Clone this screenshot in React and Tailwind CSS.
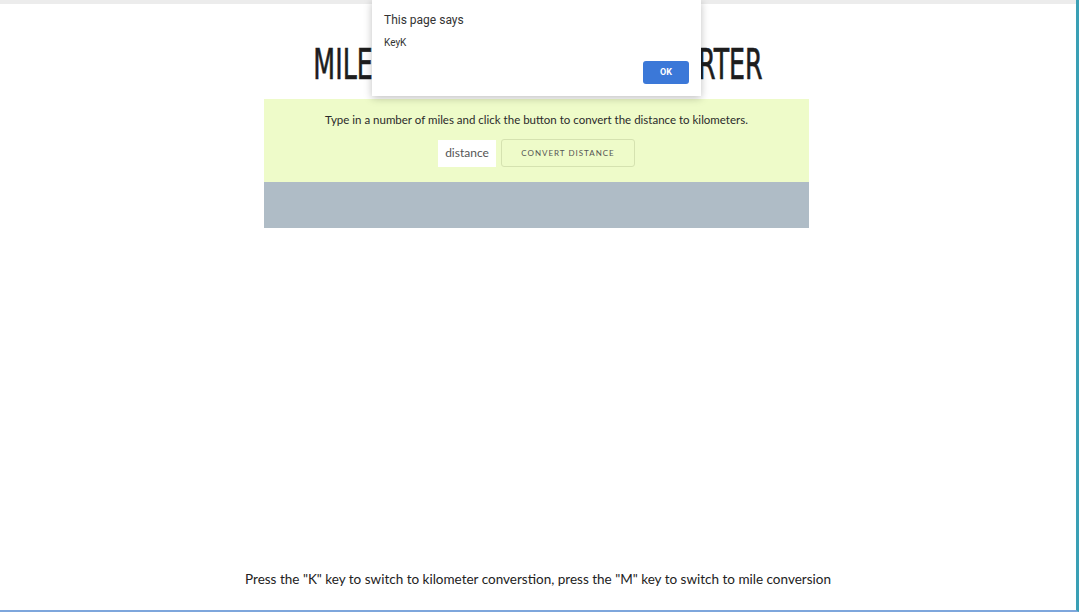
import React from 'react';

const App = () => {
  return (
    <div className="relative h-[612px] w-[1079px] overflow-hidden bg-white font-['Lato',sans-serif]">
      <div className="flex h-full flex-col border-r-[3px] border-b-2 border-r-[#3aa0b5] border-b-[#7ea6dc]">
        <div className="h-[4px] bg-[#ececec]" />
        <h1 className="mt-[34px] scale-x-[0.588] text-center font-['DejaVu_Sans',sans-serif] text-[43px] leading-[52px] text-[#1d1d1d] [-webkit-text-stroke:0.7px_#1d1d1d]">
          MILES TO KILOMETERS CONVERTER
        </h1>
        <div className="ml-[264px] mt-[9px] w-[545px]">
          <div className="flex h-[83px] flex-col items-center bg-[#eefbc9] pt-[13px]">
            <p className="text-[11.5px] leading-[16px] text-[#2a2a2a]">
              Type in a number of miles and click the button to convert the distance to kilometers.
            </p>
            <div className="mt-[11px] flex items-center gap-[5px]">
              <div className="flex h-[27px] w-[58px] items-center justify-center bg-white text-[12px] text-[#555]">
                distance
              </div>
              <button className="flex h-[28px] w-[134px] items-center justify-center rounded-[3px] border border-[#d5e2b0] text-[8px] tracking-[1px] text-[#555]">
                CONVERT DISTANCE
              </button>
            </div>
          </div>
          <div className="h-[46px] bg-[#afbcc6]" />
        </div>
        <div className="flex-1" />
        <p className="mb-[21px] text-center text-[13.5px] leading-[20px] text-[#222]">
          Press the "K" key to switch to kilometer converstion, press the "M" key to switch to mile conversion
        </p>
      </div>

      <div className="absolute left-[372px] top-0 flex h-[96px] w-[329px] flex-col bg-white px-[12px] pt-[12px] font-['Roboto',sans-serif] text-[#333] shadow-[0_2px_8px_rgba(0,0,0,0.25)]">
        <div className="text-[12px] leading-[16px]">This page says</div>
        <div className="pt-[8px] text-[10px] leading-[14px]">KeyK</div>
        <div className="mt-[11px] flex justify-end">
          <button className="flex h-[23px] w-[46px] items-center justify-center rounded-[3px] bg-[#3b78d8] text-[9px] font-bold text-white">
            OK
          </button>
        </div>
      </div>
    </div>
  );
};

export default App;
